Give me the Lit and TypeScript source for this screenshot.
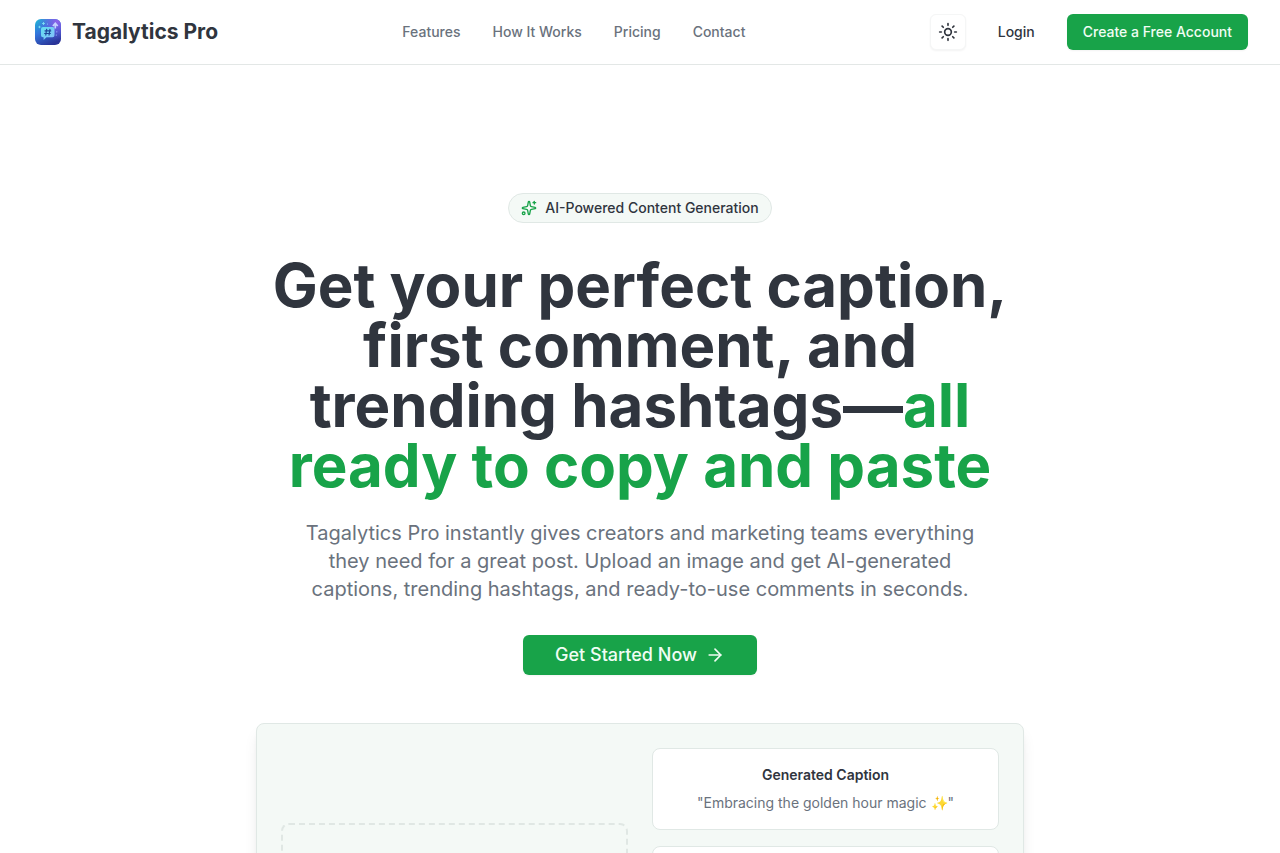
import { LitElement, html, css, svg, nothing } from "lit";
import { customElement, property } from "lit/decorators.js";

const navLinks = [
  { label: "Features", href: "#features" },
  { label: "How It Works", href: "#how-it-works" },
  { label: "Pricing", href: "#pricing" },
  { label: "Contact", href: "#contact" },
];

interface Result {
  title?: string;
  body?: string;
}

// Results without text yet are drawn as blank cards of equal height.
const results: Result[] = [
  { title: "Generated Caption", body: '"Embracing the golden hour magic ✨"' },
  {},
  {},
];

const logo = svg`
  <defs>
    <linearGradient id="tile" x1="0.1" y1="0" x2="0.6" y2="1">
      <stop offset="0" stop-color="#22b4d6" />
      <stop offset="0.45" stop-color="#3375dc" />
      <stop offset="1" stop-color="#2a3498" />
    </linearGradient>
    <radialGradient id="glow" cx="0.85" cy="0.1" r="0.75">
      <stop offset="0" stop-color="#8f62ea" />
      <stop offset="1" stop-color="#6a4fe0" stop-opacity="0" />
    </radialGradient>
    <linearGradient id="bubble" x1="0" y1="0" x2="1" y2="1">
      <stop offset="0" stop-color="#62e0f0" />
      <stop offset="1" stop-color="#86bcfa" />
    </linearGradient>
  </defs>
  <rect x="3" y="3" width="26" height="26" rx="6" fill="url(#tile)" />
  <rect x="3" y="3" width="26" height="26" rx="6" fill="url(#glow)" />
  <path d="M11 11h9.500a2 2 0 0 1 2 2v6.300a2 2 0 0 1-2 2h-6l-2.900 2.700v-2.700H11a2 2 0 0 1-2-2V13a2 2 0 0 1 2-2z" fill="url(#bubble)" />
  <path d="M14.700 12.900l-1 6.600M18 12.900l-1 6.600M12.600 14.900h6.600M12.200 17.500h6.600" stroke="#20489c" stroke-width="1.200" fill="none" />
  <path d="M23.300 12.500V8.500M20.900 10l2.400-2.800 2.400 2.800" stroke="#c5d3ff" stroke-width="1.700" fill="none" />
  <path d="M11.500 6v3M10 7.500h3M7.500 9.800v2.400M6.300 11h2.400" stroke="#7fe9f5" stroke-width="0.800" fill="none" />
  <circle cx="24.800" cy="15.800" r="0.600" fill="#a9c4ff" />
  <circle cx="24.300" cy="19" r="0.600" fill="#a9c4ff" />
  <circle cx="15.500" cy="8" r="0.500" fill="#8fdcf7" />
`;

const glyphs = {
  sun: svg`<circle cx="12" cy="12" r="4" /><path d="M12 2v2" /><path d="M12 20v2" /><path d="m4.930 4.930 1.410 1.410" /><path d="m17.660 17.660 1.410 1.410" /><path d="M2 12h2" /><path d="M20 12h2" /><path d="m6.340 17.660-1.410 1.410" /><path d="m19.070 4.930-1.410 1.410" />`,
  sparkles: svg`<path d="M11.017 2.814a1 1 0 0 1 1.966 0l1.051 5.558a2 2 0 0 0 1.594 1.594l5.558 1.051a1 1 0 0 1 0 1.966l-5.558 1.051a2 2 0 0 0-1.594 1.594l-1.051 5.558a1 1 0 0 1-1.966 0l-1.051-5.558a2 2 0 0 0-1.594-1.594l-5.558-1.051a1 1 0 0 1 0-1.966l5.558-1.051a2 2 0 0 0 1.594-1.594z" /><path d="M20 2v4" /><path d="M22 4h-4" /><circle cx="4" cy="20" r="2" />`,
  arrow: svg`<path d="M5 12h14" /><path d="m12 5 7 7-7 7" />`,
  upload: svg`<path d="M12 3v12" /><path d="m17 8-5-5-5 5" /><path d="M21 15v4a2 2 0 0 1-2 2H5a2 2 0 0 1-2-2v-4" />`,
};

@customElement("line-icon")
class LineIcon extends LitElement {
  @property() name: keyof typeof glyphs = "sun";

  static styles = css`
    :host { display: inline-flex; width: 16px; height: 16px; flex: none; }
    .glyph { width: 100%; height: 100%; fill: none; stroke: currentColor; stroke-width: 2; stroke-linecap: round; stroke-linejoin: round; }
  `;

  render() {
    return html`<svg class="glyph" viewBox="0 0 24 24" aria-hidden="true">${glyphs[this.name]}</svg>`;
  }
}

@customElement("site-header")
class SiteHeader extends LitElement {
  static styles = css`
    :host { display: block; border-bottom: 1px solid #e3e7e6; background: #fff; }
    .bar { display: flex; align-items: center; justify-content: space-between; height: 64px; padding: 0 32px; }
    .brand { display: flex; align-items: center; gap: 8px; color: inherit; text-decoration: none; font-size: 21px; line-height: 28px; font-weight: 700; }
    .logo { width: 32px; height: 32px; }
    .links { display: flex; gap: 32px; }
    .link { color: #6a727d; text-decoration: none; font-size: 14px; line-height: 20px; font-weight: 500; }
    .actions { display: flex; align-items: center; gap: 16px; }
    .btn { display: inline-flex; align-items: center; justify-content: center; height: 36px; box-sizing: border-box; padding: 0 16px; border: 0; border-radius: 6px; background: transparent; color: inherit; font-family: inherit; font-size: 14px; line-height: 20px; font-weight: 500; text-decoration: none; }
    .theme { width: 36px; padding: 0; background: #fff; border: 1px solid #f5f6f6; box-shadow: 0 1px 2px rgb(0 0 0 / 5%); }
    .sun { width: 20px; height: 20px; }
    .primary { background: #18a349; color: #f0fdf4; box-shadow: 0 1px 2px rgb(0 0 0 / 5%); }
  `;

  render() {
    return html`
      <header class="bar">
        <a class="brand" href="#"><svg class="logo" viewBox="0 0 32 32" aria-hidden="true">${logo}</svg>Tagalytics Pro</a>
        <nav class="links" aria-label="Main">
          ${navLinks.map((l) => html`<a class="link" href=${l.href}>${l.label}</a>`)}
        </nav>
        <div class="actions">
          <button class="btn theme" type="button" aria-label="Toggle theme"><line-icon class="sun" name="sun"></line-icon></button>
          <a class="btn" href="#login">Login</a>
          <a class="btn primary" href="#signup">Create a Free Account</a>
        </div>
      </header>
    `;
  }
}

@customElement("product-preview")
class ProductPreview extends LitElement {
  static styles = css`
    :host { display: block; }
    .panel { display: grid; grid-template-columns: 1fr 1fr; gap: 24px; align-items: center; padding: 24px; border: 1px solid #e0e8e5; border-radius: 8px; background: #f4f9f6; box-shadow: 0 10px 15px -3px rgb(0 0 0 / 10%), 0 4px 6px -4px rgb(0 0 0 / 10%); }
    .drop { display: flex; align-items: center; justify-content: center; min-height: 124px; border: 2px dashed #e0e7e4; border-radius: 8px; color: #6a727d; }
    .upload { width: 32px; height: 32px; }
    .cards { display: grid; grid-auto-rows: 1fr; gap: 16px; }
    .card { padding: 16px; border: 1px solid #e0e8e5; border-radius: 8px; background: #fff; font-size: 14px; line-height: 20px; text-align: center; }
    .title { margin: 0 0 8px; font-size: 14px; font-weight: 600; }
    .body { margin: 0; color: #6a727d; }
  `;

  render() {
    return html`
      <div class="panel">
        <div class="drop"><line-icon class="upload" name="upload"></line-icon></div>
        <div class="cards">
          ${results.map(
            (r) => html`<article class="card">
              ${r.title ? html`<h2 class="title">${r.title}</h2>` : nothing}
              ${r.body ? html`<p class="body">${r.body}</p>` : nothing}
            </article>`
          )}
        </div>
      </div>
    `;
  }
}

@customElement("app-root")
class AppRoot extends LitElement {
  static styles = css`
    :host { display: block; min-height: 100vh; background: #fff; color: #30353e; font-family: Inter, "Liberation Sans", sans-serif; }
    .hero { display: flex; flex-direction: column; align-items: center; max-width: 768px; margin: 0 auto; padding: 128px 16px; text-align: center; }
    .pill { display: inline-flex; align-items: center; gap: 8px; padding: 4px 12px; border: 1px solid #e0e8e5; border-radius: 15px; background: #f4f9f6; font-size: 14px; line-height: 20px; font-weight: 500; }
    .spark { color: #18a349; }
    .headline { margin: 32px 0 0; font-size: 60px; line-height: 60px; font-weight: 700; }
    .accent { color: #18a349; }
    .lede { max-width: 672px; margin: 24px 0 0; color: #6a727d; font-size: 20px; line-height: 28px; }
    .cta { display: inline-flex; align-items: center; gap: 8px; height: 40px; margin-top: 32px; padding: 0 32px; border-radius: 6px; background: #18a349; color: #f0fdf4; font-size: 18px; line-height: 28px; font-weight: 500; text-decoration: none; box-shadow: 0 1px 2px rgb(0 0 0 / 5%); }
    .arrow { width: 20px; height: 20px; }
    .preview { align-self: stretch; margin-top: 48px; }
  `;

  render() {
    return html`
      <site-header></site-header>
      <main class="hero">
        <div class="pill"><line-icon class="spark" name="sparkles"></line-icon>AI-Powered Content Generation</div>
        <h1 class="headline">Get your perfect caption, first comment, and trending hashtags—<span class="accent">all ready to copy and paste</span></h1>
        <p class="lede">Tagalytics Pro instantly gives creators and marketing teams everything they need for a great post. Upload an image and get AI-generated captions, trending hashtags, and ready-to-use comments in seconds.</p>
        <a class="cta" href="#signup">Get Started Now<line-icon class="arrow" name="arrow"></line-icon></a>
        <product-preview class="preview"></product-preview>
      </main>
    `;
  }
}
